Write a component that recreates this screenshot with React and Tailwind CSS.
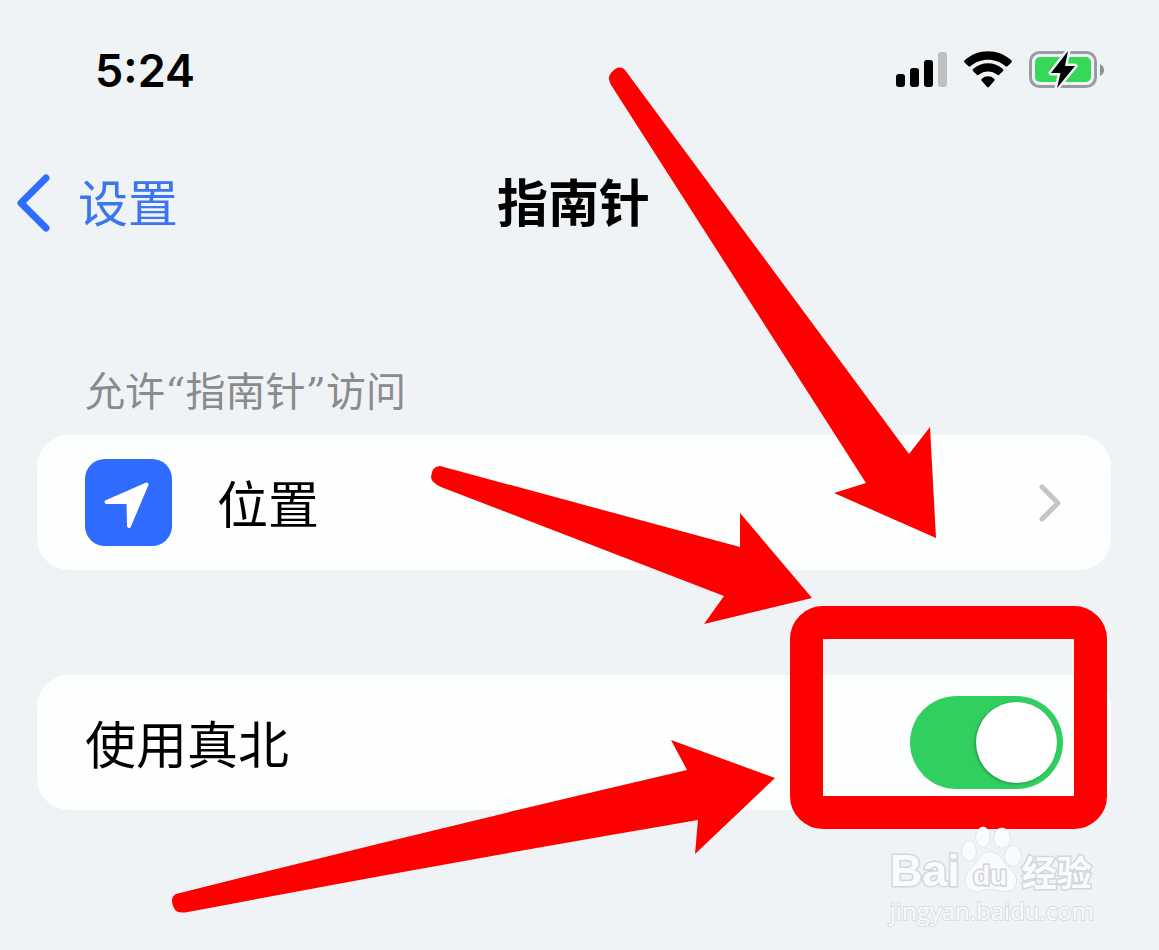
import { useState } from 'react'

const SignalIcon = () => (
  <svg width="52" height="36" viewBox="0 0 52 36" aria-hidden="true">
    <rect x="0" y="22" width="9" height="13" rx="3" fill="#000" />
    <rect x="14" y="16" width="9" height="19" rx="3" fill="#000" />
    <rect x="28" y="8" width="9" height="27" rx="3" fill="#000" />
    <rect x="42" y="0" width="9" height="35" rx="3" fill="#bfc0c2" />
  </svg>
)

const WifiIcon = () => (
  <svg width="48" height="38" viewBox="0 0 48 38" aria-hidden="true">
    <path d="M0.6 11.400 Q-0.4 10.300 0.7 9.300 C13.500 -2.900 34.500 -2.900 47.300 9.300 Q48.400 10.300 47.400 11.400 L43.500 15.200 Q42.500 16 41.500 15.200 C32 6.500 16 6.500 6.500 15.200 Q5.500 16 4.500 15.200 Z" />
    <path d="M9 20 Q8 19 9.100 18 C17.600 10.300 30.400 10.300 38.900 18 Q40 19 39 20 L35.200 23.800 Q34.300 24.700 33.300 23.800 C28 19.300 20 19.300 14.700 23.800 Q13.700 24.700 12.800 23.800 Z" />
    <path d="M17.700 29.800 Q16.700 28.700 17.800 27.800 C21.500 24.500 26.500 24.500 30.200 27.800 Q31.300 28.700 30.300 29.800 L24.900 36 Q24 36.900 23.100 36 Z" />
  </svg>
)

const BatteryIcon = () => (
  <svg width="76" height="40" viewBox="0 0 76 40" aria-hidden="true">
    <rect x="2.500" y="2.500" width="65" height="34" rx="9" fill="none" stroke="#9b9ba3" strokeWidth="3" />
    <rect x="7" y="7" width="56" height="25" rx="5" fill="#37d857" />
    <path d="M72 14 Q76 16 76 20 Q76 24 72 26 Z" fill="#8f8f96" />
    <path
      d="M40 1 L23 23 H32.500 L29 38 L47 16 H37 Z"
      fill="#000"
      stroke="#eff3f6"
      strokeWidth="5"
      strokeLinejoin="round"
      paintOrder="stroke"
    />
  </svg>
)

const StatusBar = () => (
  <div className="flex h-[140px] items-center justify-between pl-[95px] pr-[55px]">
    <span className="font-['Inter'] text-[45px] font-semibold leading-none">5:24</span>
    <div className="flex items-center gap-4">
      <SignalIcon />
      <WifiIcon />
      <BatteryIcon />
    </div>
  </div>
)

const NavBar = () => (
  <header className="grid h-[126px] grid-cols-[1fr_auto_1fr] items-center pl-4 pr-7">
    <a href="#settings" className="flex items-center gap-7 text-[50px] leading-none text-[#3b76f0]">
      <svg width="34" height="58" viewBox="0 0 34 58" fill="none" aria-hidden="true">
        <path d="M30 4 L5 29 L30 54" stroke="#2c6cff" strokeWidth="7" strokeLinecap="round" strokeLinejoin="round" />
      </svg>
      <span className="pb-1.5">设置</span>
    </a>
    <h1 className="pb-1.5 text-[51px] font-bold leading-none">指南针</h1>
  </header>
)

const LocationIcon = () => (
  <svg width="87" height="87" viewBox="0 0 87 87" className="rounded-[20px] bg-[#2f6bff]" aria-hidden="true">
    <path
      d="M21.500 43 L61.500 25.500 L44 67 L43.500 43 Z"
      fill="#fff"
      stroke="#fff"
      strokeWidth="4"
      strokeLinejoin="round"
    />
  </svg>
)

const Switch = ({ id, checked, onChange }) => (
  <span className="relative h-[93px] w-[153px]">
    <input
      id={id}
      type="checkbox"
      role="switch"
      checked={checked}
      onChange={(e) => onChange(e.target.checked)}
      className="peer block h-full w-full cursor-pointer appearance-none rounded-full bg-gray-300 checked:bg-[#30cf60]"
    />
    <span className="pointer-events-none absolute left-1.5 top-1.5 size-[81px] rounded-full bg-white shadow-[-1px_1px_3px_rgba(0,0,0,0.3)] peer-checked:left-[66px]" />
  </span>
)

const ARROWS = [
  'M625 70 L909 454 L930 427 L936 538 L834 493 L866 483 L613 88 Q606 78 611 73 Q619 64 625 70 Z',
  'M440 466 L740 547 L740 513 L812 598 L704 624 L724 596 L441 487 Q431 482 431 477 Q432 466 440 466 Z',
  'M176 894 Q430 830 687 770 L671 740 L775 778 L695 854 L698 820 Q440 864 188 912 Q176 914 174 908 Q169 898 176 894 Z',
]

const Arrows = () => (
  <svg viewBox="0 0 1159 950" className="pointer-events-none absolute left-0 top-0 w-full" fill="#fe0000" aria-hidden="true">
    {ARROWS.map((d) => (
      <path key={d} d={d} />
    ))}
  </svg>
)

const Watermark = () => (
  <div className="pointer-events-none absolute right-[65px] top-[826px] font-bold text-[#fafbfd] [-webkit-text-stroke:3px_#d3d6da] [paint-order:stroke]">
    <div className="flex items-end">
      <span className="font-['Liberation_Sans'] text-[45px] leading-[46px]">Bai</span>
      <svg width="62" height="68" viewBox="0 0 62 68" fill="#fafbfd" stroke="#d3d6da" aria-hidden="true">
        <ellipse cx="9" cy="25" rx="7" ry="10" />
        <ellipse cx="23" cy="11" rx="7" ry="10" />
        <ellipse cx="42" cy="12" rx="8" ry="10" />
        <ellipse cx="53" cy="30" rx="8" ry="10" />
        <path d="M30 26 C40 26 42 36 49 42 C60 50 58 65 45 65 C39 65 36 63 30 63 C25 63 21 65 16 65 C4 65 2 51 11 43 C18 37 20 26 30 26 Z" />
        <text x="13" y="59" fontFamily="Liberation Sans" fontSize="28" fontWeight="700" stroke="#cfd2d7" strokeWidth="3">
          du
        </text>
      </svg>
      <span className="text-[35px] leading-[46px]">经验</span>
    </div>
    <p className="font-['Open_Sans'] text-[24px] font-normal leading-[34px] [-webkit-text-stroke:2px_#d9dce0]">
      jingyan.baidu.com
    </p>
  </div>
)

export default function App() {
  const [trueNorth, setTrueNorth] = useState(true)

  return (
    <div className="relative min-h-screen overflow-hidden bg-[#eff3f6] font-['Noto_Sans_CJK_SC',sans-serif] text-black">
      <StatusBar />
      <NavBar />

      <main className="pl-[37px] pr-12 pt-[101px]">
        {/* Access */}
        <h2 className="mb-[18px] pl-12 font-['DejaVu_Serif','Noto_Sans_CJK_SC',sans-serif] text-[40px] leading-[50px] text-[#8a8b8e]">
          允许“指南针”访问
        </h2>
        <button type="button" className="flex h-[135px] w-full items-center rounded-[32px] bg-[#fdfffe] pl-12 pr-12 text-left">
          <LocationIcon />
          <span className="ml-[45px] flex-1 text-[51px] leading-none">位置</span>
          <svg width="26" height="40" viewBox="0 0 26 40" fill="none" aria-hidden="true">
            <path d="M5 4 L21 20 L5 36" stroke="#c4c5c9" strokeWidth="5" strokeLinecap="round" strokeLinejoin="round" />
          </svg>
        </button>

        {/* True north */}
        <div className="relative mt-[105px] flex h-[135px] items-center justify-between rounded-[32px] bg-[#fdfffe] px-12">
          <label htmlFor="true-north" className="text-[51px] leading-none">使用真北</label>
          <Switch id="true-north" checked={trueNorth} onChange={setTrueNorth} />
          <div className="pointer-events-none absolute -top-[69px] right-1 h-[223px] w-[317px] rounded-[33px] border-[33px] border-[#fe0000]" />
        </div>
      </main>

      <Arrows />
      <Watermark />
    </div>
  )
}
